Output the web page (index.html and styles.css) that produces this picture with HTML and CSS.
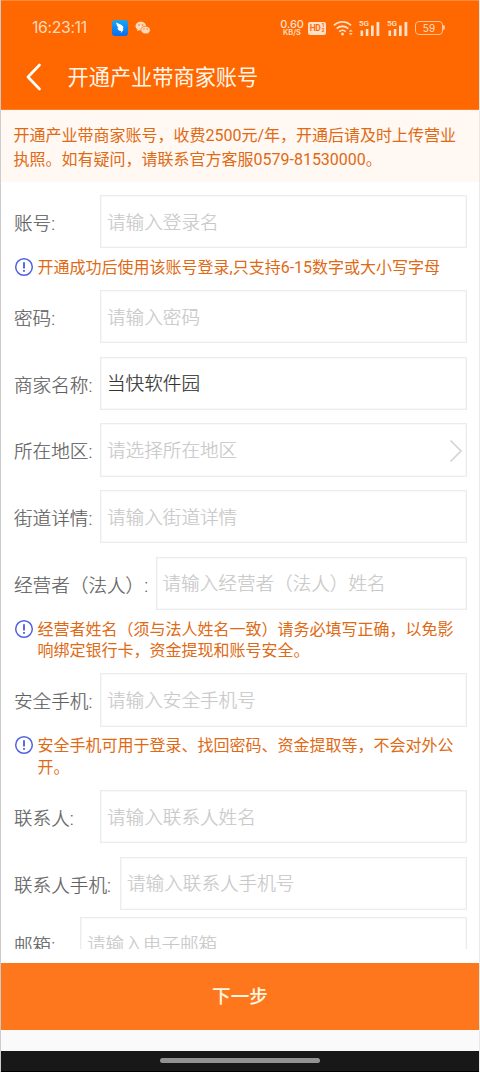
FILE: index.html
```html
<!DOCTYPE html>
<html lang="zh-CN">
<head>
<meta charset="utf-8">
<title>开通产业带商家账号</title>
<link rel="stylesheet" href="styles.css">
</head>
<body>
<div class="screen">
  <header class="header">
    <div class="status">
      <span class="clock">16:23:11</span>
      <svg class="app-icon" width="16" height="16" viewBox="0 0 16 16"><defs><linearGradient id="blue" x2="0" y2="1"><stop stop-color="#18a7ef"/><stop offset="1" stop-color="#086cf0"/></linearGradient></defs><rect width="16" height="16" rx="3" fill="url(#blue)"/><path d="M4.2 2.6C7 4 9.500 4.600 11 6.200c.7.9.3 2-.3 3l.9.300-2.800 3.800.3-2.200C6.700 10.800 5.700 9.500 5.300 8l1.400.3C5.300 6.800 4.300 4.800 4.200 2.600z" fill="#fff"/></svg>
      <svg class="wechat" width="16" height="14" viewBox="0 0 16 14"><path d="M5.800.7C2.800.7.500 2.700.500 5.100c0 1.400.8 2.600 2 3.400L2 10.200l2-1c.6.2 1.200.3 1.800.3 3 0 5.300-1.900 5.300-4.400S8.800.7 5.800.7z" fill="#ffd9bb"/><path d="M10.600 5.200c-2.700 0-4.700 1.700-4.700 3.900 0 2.100 2 3.800 4.700 3.800.6 0 1.100-.1 1.600-.3l1.700.9-.4-1.500c1.100-.7 1.800-1.700 1.800-2.900 0-2.200-2-3.900-4.700-3.900z" fill="#ffd9bb" stroke="#ff6700" stroke-width=".7"/><g fill="#ff6700"><circle cx="4" cy="3.900" r=".75"/><circle cx="7.500" cy="3.900" r=".75"/><circle cx="9" cy="7.900" r=".65"/><circle cx="12.200" cy="7.900" r=".65"/></g></svg>
      <div class="indicators">
        <div class="speed"><b>0.60</b><span>KB/S</span></div>
        <div class="hd"><span>HD</span><span class="hd-n"><i>1</i><i>2</i></span></div>
        <svg class="wifi" width="21" height="16" viewBox="0 0 21 16"><g fill="none" stroke="#ffe0c8" stroke-width="1.900"><path d="M1 5.400a12 12 0 0 1 17 0"/><path d="M3.700 8.600a8.300 8.300 0 0 1 11.600 0"/><path d="M6.300 11.600a4.700 4.700 0 0 1 6.400 0"/></g><circle cx="9.500" cy="14" r="1.500" fill="#ffe0c8"/><path d="M15.800 11.800l2-2.500 2 2.500zM15.800 13l2 2.500 2-2.500z" fill="#ffc496"/></svg>
        <div class="cell"><span>5G</span><svg width="21" height="15" viewBox="0 0 21 15"><path d="M1.500 9.500h2.600V15H1.500zM6.800 8h2.600v7H6.800zM12 4.500h2.700V15H12zM17.500 1h2.800v14h-2.800z" fill="#ffe0c8"/></svg></div>
        <div class="cell"><span>5G</span><svg width="21" height="15" viewBox="0 0 21 15"><path d="M1.500 9.500h2.600V15H1.500zM6.800 8h2.600v7H6.800zM12 4.500h2.700V15H12zM17.500 1h2.800v14h-2.800z" fill="#ffe0c8"/></svg></div>
        <div class="battery">59</div>
      </div>
    </div>
    <div class="titlebar">
      <svg class="back" width="17" height="28" viewBox="0 0 17 28"><path d="M14.500 2 3 14l11.500 12" fill="none" stroke="#fff" stroke-width="2.700" stroke-linecap="round" stroke-linejoin="round"/></svg>
      <h1 class="title">开通产业带商家账号</h1>
    </div>
  </header>
  <div class="notice">开通产业带商家账号，收费2500元/年，开通后请及时上传营业<br>执照。如有疑问，请联系官方客服0579-81530000。</div>
  <main class="form">
    <div class="row"><label class="label">账号:</label><div class="field">请输入登录名</div></div>
    <div class="tip"><svg class="info" width="20" height="20" viewBox="0 0 20 20"><circle cx="10" cy="10" r="8.300" fill="none" stroke="#5263de" stroke-width="1.500"/><path d="M10 5.300v6.200M10 13v1.800" stroke="#5263de" stroke-width="1.900"/></svg><p>开通成功后使用该账号登录,只支持6-15数字或大小写字母</p></div>
    <div class="row"><label class="label">密码:</label><div class="field">请输入密码</div></div>
    <div class="row"><label class="label">商家名称:</label><div class="field filled">当快软件园</div></div>
    <div class="row"><label class="label">所在地区:</label><div class="field">请选择所在地区<svg class="arrow" width="14" height="24" viewBox="0 0 14 24"><path d="M1.500 1.500 12 12 1.500 22.500" fill="none" stroke="#d4d4d4" stroke-width="1.700"/></svg></div></div>
    <div class="row"><label class="label">街道详情:</label><div class="field">请输入街道详情</div></div>
    <div class="row"><label class="label label-owner">经营者（法人）:</label><div class="field">请输入经营者（法人）姓名</div></div>
    <div class="tip"><svg class="info" width="20" height="20" viewBox="0 0 20 20"><circle cx="10" cy="10" r="8.300" fill="none" stroke="#5263de" stroke-width="1.500"/><path d="M10 5.300v6.200M10 13v1.800" stroke="#5263de" stroke-width="1.900"/></svg><p>经营者姓名（须与法人姓名一致）请务必填写正确，以免影<br>响绑定银行卡，资金提现和账号安全。</p></div>
    <div class="row"><label class="label">安全手机:</label><div class="field">请输入安全手机号</div></div>
    <div class="tip"><svg class="info" width="20" height="20" viewBox="0 0 20 20"><circle cx="10" cy="10" r="8.300" fill="none" stroke="#5263de" stroke-width="1.500"/><path d="M10 5.300v6.200M10 13v1.800" stroke="#5263de" stroke-width="1.900"/></svg><p>安全手机可用于登录、找回密码、资金提取等，不会对外公<br>开。</p></div>
    <div class="row"><label class="label">联系人:</label><div class="field">请输入联系人姓名</div></div>
    <div class="row row-phone"><label class="label label-phone">联系人手机:</label><div class="field">请输入联系人手机号</div></div>
    <div class="row"><label class="label label-mail">邮箱:</label><div class="field">请输入电子邮箱</div></div>
  </main>
  <div class="action"><button class="next">下一步</button></div>
  <div class="navbar"><span class="handle"></span></div>
</div>
</body>
</html>
```
FILE: styles.css
```css
* { box-sizing: border-box; }
body {
  margin: 0;
  background: #fafafa;
  font-family: Roboto, "Noto Sans CJK SC", sans-serif;
}
.screen {
  width: 480px;
  height: 1072px;
  display: flex;
  flex-direction: column;
  overflow: hidden;
  border-left: 1px solid #ccc;
  border-right: 1px solid #e9e9e9;
}
.header {
  height: 109.5px;
  flex: none;
  margin: 0 -1px;
  background: #ff6700;
  border: 1px solid #ff8a3b;
  border-bottom-color: #ff7d26;
}
.status {
  height: 54px;
  display: flex;
  align-items: center;
  padding: 0 36px 0 31px;
  color: #ffe0c8;
}
.clock {
  width: 80px;
  font: 400 15.8px/20px Inter, sans-serif;
  letter-spacing: -0.35px;
  color: #ffd9bb;
}
.wechat { margin-left: 7px; }
.indicators {
  margin-left: auto;
  display: flex;
  align-items: center;
}
.speed {
  width: 24px;
  display: flex;
  flex-direction: column;
  align-items: center;
  font-family: Inter, sans-serif;
}
.speed b { font-size: 11px; line-height: 10px; font-weight: 500; letter-spacing: -0.1px; }
.speed span { font-size: 7.5px; line-height: 8px; font-weight: 600; }
.hd {
  width: 18px;
  height: 13px;
  margin-left: 4px;
  display: flex;
  align-items: center;
  justify-content: center;
  border-radius: 2px;
  background: #ffe0c8;
  color: #ff6700;
  font: 600 8.5px/12px Roboto, sans-serif;
  letter-spacing: -0.4px;
}
.hd-n { display: flex; flex-direction: column; margin-left: 1px; }
.hd-n i { font: 700 5.5px/5.5px Roboto, sans-serif; }
.wifi { margin-left: 7px; }
.cell {
  width: 21px;
  height: 15px;
  margin-left: 5px;
  position: relative;
}
.cell + .cell { margin-left: 7px; }
.cell span {
  position: absolute;
  left: 0;
  top: -1px;
  font: 600 8px/8px Roboto, sans-serif;
  letter-spacing: -0.1px;
}
.cell svg { display: block; }
.battery {
  width: 28px;
  height: 14px;
  margin-left: 7px;
  border: 1.4px solid #ffc496;
  border-radius: 4px;
  position: relative;
  font: 400 10px/12px Inter, sans-serif;
  text-align: center;
}
.battery::after {
  content: "";
  position: absolute;
  right: -3px;
  top: 3px;
  width: 2px;
  height: 5px;
  border-radius: 0 2px 2px 0;
  background: #ffc496;
}
.titlebar {
  height: 44px;
  display: flex;
  align-items: center;
  padding-left: 24px;
}
.title {
  margin: 2px 0 0 25.5px;
  font-size: 21.2px;
  line-height: 30px;
  font-weight: 400;
  color: #fff6e8;
}
.notice {
  flex: none;
  height: 72.5px;
  padding: 14px 0 0 12.5px;
  background: #fff8f3;
  color: #e06a14;
  font-size: 16px;
  line-height: 24px;
  white-space: nowrap;
}
.form {
  height: 767px;
  flex: none;
  padding: 13.2px 12px 0 13px;
  background: #fff;
  overflow: hidden;
}
.row {
  height: 53.3px;
  margin-bottom: 13.35px;
  display: flex;
}
.row:has(+ .tip) { margin-bottom: 0; }
.row-phone { margin-bottom: 7px; }
.label {
  width: 86px;
  flex: none;
  padding-top: 2px;
  color: #606060;
  font-size: 18.6px;
  line-height: 54px;
  font-weight: 300;
  -webkit-text-stroke: 0.2px;
  white-space: nowrap;
}
.label-owner { width: 141.5px; }
.label-phone { width: 106px; }
.label-mail { width: 66px; }
.field {
  flex: 1;
  display: flex;
  align-items: center;
  justify-content: space-between;
  padding: 2px 3px 0 6px;
  border: 1.5px solid #ececec;
  box-shadow: inset 0 0 0 0.6px #f3f3f3;
  color: #c8c8c8;
  font-size: 18.6px;
  line-height: 50px;
  font-weight: 300;
  -webkit-text-stroke: 0.2px;
  white-space: nowrap;
}
.filled { color: #333; }
.tip {
  display: flex;
  gap: 4px;
  margin-left: -0.5px;
  padding: 8.5px 0 11.5px;
  color: #e06a14;
}
.info { flex: none; }
.tip p {
  margin: 0;
  font-size: 16px;
  line-height: 21.7px;
  white-space: nowrap;
}
.action {
  flex: none;
  margin: 0 -1px;
  padding-top: 14px;
  background: #fff;
}
.next {
  display: block;
  width: 100%;
  height: 67px;
  padding: 1px 0 0;
  border: 0;
  background: #ff771d;
  color: #fff6e0;
  font: 500 18.6px/67px Roboto, "Noto Sans CJK SC", sans-serif;
}
.navbar {
  height: 21.5px;
  flex: none;
  margin: auto -1px 0;
  background: #181818;
  border-bottom: 1px solid #000;
  display: flex;
  justify-content: center;
  align-items: flex-start;
  padding-top: 7px;
}
.handle { width: 160px; height: 5px; border-radius: 3px; background: #929292; }
```
